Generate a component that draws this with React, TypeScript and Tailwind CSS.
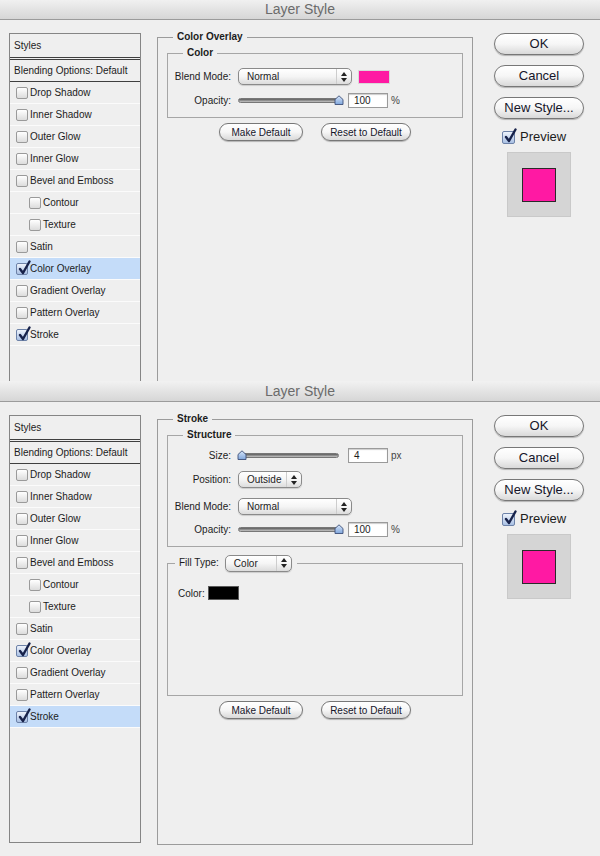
import React from 'react';

// two stacked Photoshop "Layer Style" dialogs

type Item = { name: string; checked?: boolean; indent?: boolean };

const ITEMS: Item[] = [
  { name: 'Drop Shadow' },
  { name: 'Inner Shadow' },
  { name: 'Outer Glow' },
  { name: 'Inner Glow' },
  { name: 'Bevel and Emboss' },
  { name: 'Contour', indent: true },
  { name: 'Texture', indent: true },
  { name: 'Satin' },
  { name: 'Color Overlay', checked: true },
  { name: 'Gradient Overlay' },
  { name: 'Pattern Overlay' },
  { name: 'Stroke', checked: true },
];

function Check({ checked, big }: { checked?: boolean; big?: boolean }) {
  const box = checked
    ? 'border-[#6d82a8] from-[#eef3fb] to-[#a9c0e4]'
    : 'border-[#9a9a9a] from-white to-[#dcdcdc]';
  return (
    <span
      className={`relative inline-block shrink-0 rounded-[2px] border bg-linear-to-b ${box} ${
        big ? 'w-[13px] h-[13px]' : 'w-[12px] h-[12px]'
      }`}
    >
      {checked && (
        <svg className="absolute -top-[4px] left-[1px]" width="13" height="15" viewBox="0 0 13 15">
          <path
            d="M2 9 L5 13 L11.5 1.5"
            fill="none"
            stroke="#17224a"
            strokeWidth="2.4"
            strokeLinecap="round"
            strokeLinejoin="round"
          />
        </svg>
      )}
    </span>
  );
}

function StyleList({ active }: { active: string }) {
  return (
    <div className="mt-[2px] w-[132px] h-[428px] shrink-0 border border-[#858585] bg-[#efefef] text-[10px]">
      <div className="h-[26px] flex items-center pl-[4px] border-b-[3px] border-double border-[#3f3f3f]">Styles</div>
      <div className="h-[22px] flex items-center pl-[4px] border-b border-[#3f3f3f]">Blending Options: Default</div>
      {ITEMS.map((it) => (
        <div
          key={it.name}
          className={`h-[22px] flex items-center gap-[2px] border-b border-[#fbfbfb] ${
            it.indent ? 'pl-[19px]' : 'pl-[6px]'
          } ${active === it.name ? 'bg-[#c4dcf9]' : ''}`}
        >
          <Check checked={it.checked} />
          <span>{it.name}</span>
        </div>
      ))}
    </div>
  );
}

function Select({ value, w }: { value: string; w: string }) {
  return (
    <div
      className={`${w} h-[17px] flex items-stretch rounded-[5px] border border-[#8a8a8a] bg-linear-to-b from-white via-[#f5f5f5] to-[#dcdcdc] shadow-[0_1px_1px_rgba(0,0,0,0.15)]`}
    >
      <span className="flex-1 pl-[8px] text-[10px] leading-[15px]">{value}</span>
      <span className="w-[15px] border-l border-[#cdcdcd] flex items-center justify-center">
        <svg width="6" height="10" viewBox="0 0 6 10">
          <path d="M3 0 L6 4 H0 Z M0 6 H6 L3 10 Z" fill="#222" />
        </svg>
      </span>
    </div>
  );
}

function Slider({ max }: { max?: boolean }) {
  return (
    <div className="relative w-[101px] h-[12px] flex items-center">
      <div className="w-full h-[5px] rounded-full border border-[#777] bg-linear-to-b from-[#5c5c5c] to-[#c6c6c6]" />
      <svg
        className={`absolute top-[0px] ${max ? 'right-[-5px]' : 'left-[-1px]'}`}
        width="10"
        height="10"
        viewBox="0 0 10 10"
      >
        <defs>
          <linearGradient id="thumb" x1="0" y1="0" x2="0" y2="1">
            <stop offset="0" stopColor="#d9e7fa" />
            <stop offset="1" stopColor="#7fa6dc" />
          </linearGradient>
        </defs>
        <path d="M1 9.5 V4.5 L5 0.8 L9 4.5 V9.5 Z" fill="url(#thumb)" stroke="#3d4f78" strokeWidth="0.9" />
      </svg>
    </div>
  );
}

function NumBox({ value }: { value: string }) {
  return (
    <div className="w-[40px] h-[15px] bg-white border border-[#9a9a9a] shadow-[inset_0_1px_1px_rgba(0,0,0,0.2)] pl-[5px] text-[10px] leading-[13px]">
      {value}
    </div>
  );
}

function Row({ label, className = '', children }: { label: string; className?: string; children: React.ReactNode }) {
  return (
    <div className={`flex items-center ${className}`}>
      <span className="w-[63px] shrink-0 text-right text-[10px]">{label}</span>
      <div className="ml-[7px] flex items-center">{children}</div>
    </div>
  );
}

function Pill({ children, className = '' }: { children: React.ReactNode; className?: string }) {
  return (
    <button
      type="button"
      className={`flex items-center justify-center rounded-full border border-[#777] bg-linear-to-b from-white via-[#f6f6f6] to-[#d9d9d9] shadow-[0_1px_1px_rgba(0,0,0,0.25)] text-[#15152a] ${className}`}
    >
      {children}
    </button>
  );
}

function DefaultButtons({ className = '' }: { className?: string }) {
  return (
    <div className={`flex justify-center gap-[18px] ${className}`}>
      <Pill className="w-[84px] h-[18px] text-[10px]">Make Default</Pill>
      <Pill className="w-[90px] h-[18px] text-[10px]">Reset to Default</Pill>
    </div>
  );
}

function RightColumn() {
  return (
    <div className="ml-[21px] mt-[2px] w-[90px] shrink-0 flex flex-col items-center">
      <Pill className="w-[90px] h-[22px] text-[13px]">OK</Pill>
      <Pill className="mt-[10px] w-[90px] h-[22px] text-[13px]">Cancel</Pill>
      <Pill className="mt-[10px] w-[90px] h-[22px] text-[13px]">New Style...</Pill>
      <div className="self-start ml-[8px] mt-[11px] h-[14px] flex items-center gap-[5px] text-[13px]">
        <Check checked big />
        <span>Preview</span>
      </div>
      <div className="mt-[8px] w-[64px] h-[65px] bg-[#d5d5d5] border border-[#c9c9c9] flex items-center justify-center">
        <div className="w-[34px] h-[34px] bg-[#ff19a3] border border-[#2a2a2a]" />
      </div>
    </div>
  );
}

function ColorOverlayPanel() {
  return (
    <fieldset className="ml-[16px] w-[316px] h-[432px] shrink-0 border border-[#9b9b9b]">
      <legend className="ml-[15px] px-[4px] text-[10px] leading-[12px] font-bold">Color Overlay</legend>
      <fieldset className="mt-[4px] mx-[9px] border border-[#a6a6a6]">
        <legend className="ml-[15px] px-[4px] text-[10px] leading-[12px] font-bold">Color</legend>
        <div className="h-[58px] flex flex-col">
          <Row label="Blend Mode:" className="mt-[9px] h-[17px]">
            <Select value="Normal" w="w-[114px]" />
            <div className="ml-[6px] w-[32px] h-[14px] bg-[#ff19a3] border border-[#d8d8d8]" />
          </Row>
          <Row label="Opacity:" className="mt-[8px] h-[15px]">
            <Slider max />
            <div className="ml-[9px]">
              <NumBox value="100" />
            </div>
            <span className="ml-[3px] text-[10px] text-[#444]">%</span>
          </Row>
        </div>
      </fieldset>
      <DefaultButtons className="mt-[5px]" />
    </fieldset>
  );
}

function StrokePanel() {
  return (
    <fieldset className="ml-[16px] w-[316px] h-[432px] shrink-0 border border-[#9b9b9b]">
      <legend className="ml-[15px] px-[4px] text-[10px] leading-[12px] font-bold">Stroke</legend>
      <fieldset className="mt-[4px] mx-[9px] border border-[#a6a6a6]">
        <legend className="ml-[15px] px-[4px] text-[10px] leading-[12px] font-bold">Structure</legend>
        <div className="h-[105px] flex flex-col">
          <Row label="Size:" className="mt-[7px] h-[15px]">
            <Slider />
            <div className="ml-[9px]">
              <NumBox value="4" />
            </div>
            <span className="ml-[3px] text-[10px] text-[#444]">px</span>
          </Row>
          <Row label="Position:" className="mt-[8px] h-[17px]">
            <Select value="Outside" w="w-[64px]" />
          </Row>
          <Row label="Blend Mode:" className="mt-[10px] h-[17px]">
            <Select value="Normal" w="w-[114px]" />
          </Row>
          <Row label="Opacity:" className="mt-[7px] h-[15px]">
            <Slider max />
            <div className="ml-[9px]">
              <NumBox value="100" />
            </div>
            <span className="ml-[3px] text-[10px] text-[#444]">%</span>
          </Row>
        </div>
      </fieldset>
      <fieldset className="mt-[7px] mx-[9px] border border-[#a6a6a6]">
        <legend className="ml-[7px] pl-[4px] pr-[5px] h-[18px] flex items-center gap-[6px] text-[10px] leading-[12px]">
          <span>Fill Type:</span>
          <Select value="Color" w="w-[67px]" />
        </legend>
        <div className="h-[123px] flex flex-col">
          <div className="mt-[14px] pl-[10px] h-[14px] flex items-center text-[10px]">
            <span>Color:</span>
            <div className="ml-[3px] w-[31px] h-[14px] bg-black border border-[#5a5a5a]" />
          </div>
        </div>
      </fieldset>
      <DefaultButtons className="mt-[5px]" />
    </fieldset>
  );
}

function TitleBar() {
  return (
    <div className="h-[21px] shrink-0 border-b border-[#9b9b9b] bg-linear-to-b from-[#f2f2f2] to-[#d6d6d6] flex items-center justify-center text-[14px] text-[#6b6b6b]">
      Layer Style
    </div>
  );
}

function Dialog({ active, children, className = '' }: { active: string; children: React.ReactNode; className?: string }) {
  return (
    <div className={`shrink-0 flex flex-col ${className}`}>
      <TitleBar />
      <div className="flex-1 overflow-hidden flex items-start pt-[11px] pl-[9px]">
        <StyleList active={active} />
        {children}
        <RightColumn />
      </div>
    </div>
  );
}

export default function App() {
  return (
    <div className="w-[600px] h-[856px] overflow-hidden flex flex-col bg-[#efefef] text-[#1c1c1c] font-['Liberation_Sans',Arial,sans-serif]">
      <Dialog active="Color Overlay" className="h-[382px] -mt-px">
        <ColorOverlayPanel />
      </Dialog>
      <Dialog active="Stroke" className="h-[475px]">
        <StrokePanel />
      </Dialog>
    </div>
  );
}
